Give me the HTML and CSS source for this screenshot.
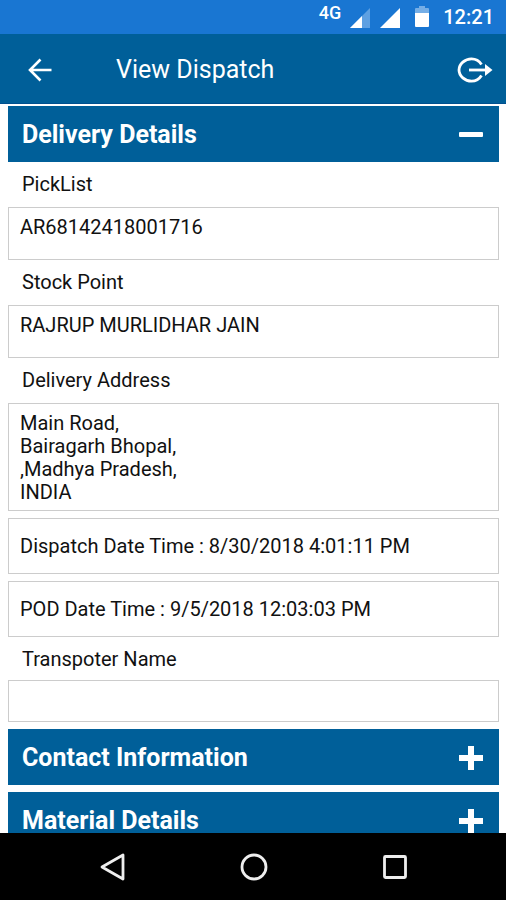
FILE: index.html
```html
<!DOCTYPE html>
<html lang="en">
<head>
<meta charset="utf-8">
<meta name="viewport" content="width=device-width, initial-scale=1">
<title>View Dispatch</title>
<link rel="stylesheet" href="styles.css">
</head>
<body>
<div class="status-bar">
  <span class="network">4G</span>
  <svg class="signal" width="22" height="22" viewBox="0 0 22 22" aria-hidden="true"><path d="M21 1V21H1Z" fill="#5ea0e2"/><path d="M13 9V21H1Z" fill="#fff"/></svg>
  <svg class="signal" width="22" height="22" viewBox="0 0 22 22" aria-hidden="true"><path d="M21 1V21H1Z" fill="#fff"/></svg>
  <svg class="battery" width="14" height="22" viewBox="0 0 14 22" aria-hidden="true"><path d="M0 3Q0 2 1 2H4V0H10V2H13Q14 2 14 3V8H0Z" fill="#75aee6"/><path d="M0 7H14V20Q14 21 13 21H1Q0 21 0 20Z" fill="#fff"/></svg>
  <time class="clock">12:21</time>
</div>
<header class="app-bar">
  <button class="icon-button" type="button" aria-label="Back">
    <svg width="24" height="24" viewBox="0 0 24 24" fill="none" stroke="#fff" stroke-width="2.6"><path d="M23.500 12H2.500M12.500 1.500L2 12L12.500 22.500"/></svg>
  </button>
  <h1 class="title">View Dispatch</h1>
  <button class="icon-button" type="button" aria-label="Log out">
    <svg width="36" height="26" viewBox="0 0 36 26" fill="none" stroke="#fff" stroke-width="2.800"><path d="M24.500 7.500C22 3.500 18.500 1.800 14.500 1.800C8 1.800 2 7 2 13C2 19 8 24.200 14.500 24.200C18.500 24.200 22 22.500 24.500 18.500"/><path d="M12 13H30"/><path d="M28 7L35.500 13L28 19Z" fill="#fff" stroke="none"/></svg>
  </button>
</header>
<main class="content">
  <h2 class="section"><button class="section-toggle" type="button" aria-expanded="true">Delivery Details
    <svg width="24" height="24" viewBox="0 0 24 24" aria-hidden="true"><rect y="9" width="24" height="5" rx="1" fill="#fff"/></svg></button></h2>
  <div class="details">
    <label class="label" for="picklist">PickList</label>
    <textarea class="field" id="picklist" rows="1" readonly>AR68142418001716</textarea>
    <label class="label" for="stock">Stock Point</label>
    <textarea class="field" id="stock" rows="1" readonly>RAJRUP MURLIDHAR JAIN</textarea>
    <label class="label" for="address">Delivery Address</label>
    <textarea class="field address" id="address" rows="4" readonly>Main Road,
Bairagarh Bhopal,
,Madhya Pradesh,
INDIA</textarea>
    <p class="date-row">Dispatch Date Time : 8/30/2018 4:01:11 PM</p>
    <p class="date-row">POD Date Time : 9/5/2018 12:03:03 PM</p>
    <label class="label compact" for="transporter">Transpoter Name</label>
    <input class="field name" id="transporter" type="text" readonly>
  </div>
  <h2 class="section"><button class="section-toggle" type="button" aria-expanded="false">Contact Information
    <svg width="24" height="24" viewBox="0 0 24 24" aria-hidden="true"><path d="M9 0H15V9H24V15H15V24H9V15H0V9H9Z" fill="#fff"/></svg></button></h2>
  <h2 class="section"><button class="section-toggle" type="button" aria-expanded="false">Material Details
    <svg width="24" height="24" viewBox="0 0 24 24" aria-hidden="true"><path d="M9 0H15V9H24V15H15V24H9V15H0V9H9Z" fill="#fff"/></svg></button></h2>
</main>
<nav class="nav-bar" aria-label="System">
  <button class="icon-button" type="button" aria-label="System back"><svg width="28" height="28" viewBox="0 0 28 28" fill="none" stroke="#eee" stroke-width="2.800" stroke-linejoin="round"><path d="M24 2V26L3 14Z"/></svg></button>
  <button class="icon-button" type="button" aria-label="Home"><svg width="28" height="28" viewBox="0 0 28 28" fill="none" stroke="#eee" stroke-width="2.800"><circle cx="14" cy="14" r="12"/></svg></button>
  <button class="icon-button" type="button" aria-label="Recent apps"><svg width="28" height="28" viewBox="0 0 28 28" fill="none" stroke="#eee" stroke-width="2.800"><rect x="3.500" y="3.500" width="21" height="21" rx="1"/></svg></button>
</nav>
</body>
</html>
```

FILE: styles.css
```css
* {
  box-sizing: border-box;
}

body {
  margin: 0;
  height: 100vh;
  display: flex;
  flex-direction: column;
  background: #fff;
  color: #111;
  font: 20px/23px Roboto, sans-serif;
}

button,
input,
textarea {
  font: inherit;
  color: inherit;
}

.status-bar {
  flex: none;
  height: 34px;
  padding: 0 12px;
  display: flex;
  align-items: center;
  justify-content: flex-end;
  background: #1976d2;
  color: #fff;
  font-weight: 500;
}

.network {
  align-self: flex-start;
  margin-right: 8px;
  font-size: 18px;
  line-height: 26px;
}

.signal {
  margin: 2px 8px 0 0;
}

.battery {
  margin: 0 14px 0 6px;
}

.clock {
  line-height: 36px;
}

.app-bar {
  flex: none;
  height: 70px;
  padding: 2px 13px 0 28px;
  display: flex;
  align-items: center;
  background: #005f99;
  border-bottom: 1px solid #00508f;
  color: #fff;
}

.icon-button {
  display: flex;
  padding: 0;
  border: 0;
  background: none;
}

.title {
  flex: 1;
  margin: 0 0 0 64px;
  font-size: 25px;
  line-height: 32px;
  font-weight: 400;
}

.content {
  flex: 1;
  min-height: 0;
  overflow: hidden;
  padding: 2px 7px 0 8px;
}

.section {
  margin: 0 0 7px;
}

.section:first-child {
  margin: 0;
}

.section-toggle {
  width: 100%;
  height: 56px;
  padding: 2px 16px 0 14px;
  display: flex;
  align-items: center;
  justify-content: space-between;
  border: 0;
  background: #005f99;
  color: #fff;
  font-size: 25px;
  line-height: 32px;
  font-weight: 700;
}

.details {
  display: flex;
  flex-direction: column;
  margin-bottom: 7px;
}

.label {
  height: 45px;
  padding: 11px 14px 0;
}

.compact {
  height: 43px;
}

.field,
.date-row {
  width: 100%;
  margin: 0;
  padding: 8px 11px;
  border: 1px solid #ccc;
  border-radius: 0;
  background: #fff;
  outline: 0;
}

.field {
  height: 53px;
  resize: none;
  overflow: hidden;
}

.address {
  height: 108px;
}

.name {
  height: 42px;
}

.date-row {
  margin-top: 7px;
  padding: 16px 11px 15px;
}

.nav-bar {
  flex: none;
  height: 67px;
  padding: 0 97px 0 99px;
  display: flex;
  align-items: center;
  justify-content: space-between;
  background: #000;
}
```
